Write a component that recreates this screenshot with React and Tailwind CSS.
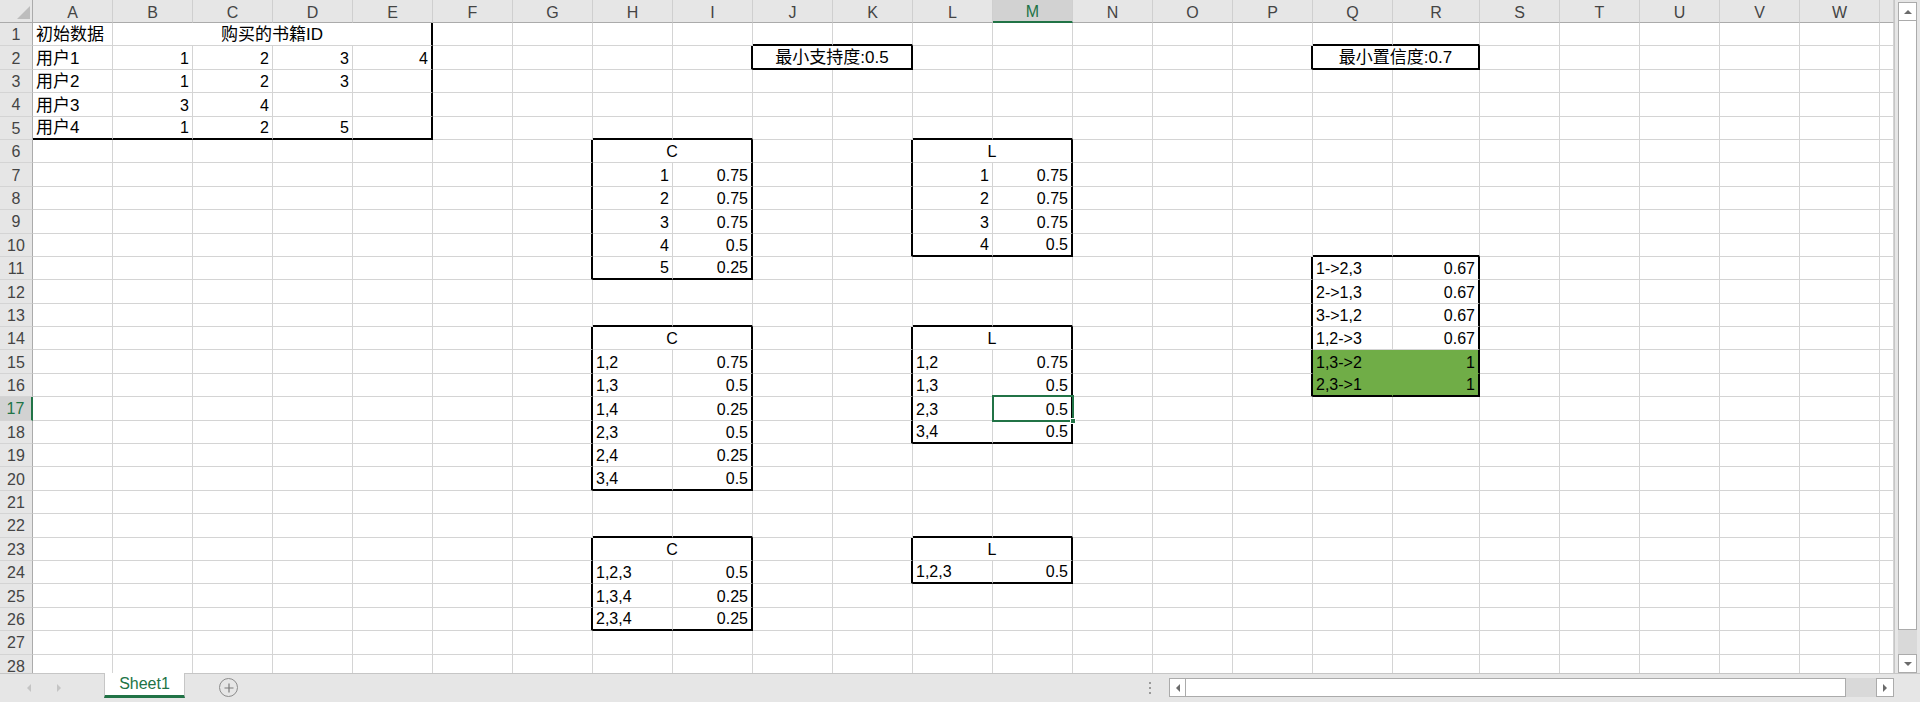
import React from 'react';

const COLS = 'ABCDEFGHIJKLMNOPQRSTUVWX'.split('');
const ROWS = Array.from({ length: 28 }, (_, i) => i + 1);
const WIDTH = {
  14: 'w-[14px]',
  80: 'w-[80px]',
  87: 'w-[87px]',
  160: 'w-[160px]',
  167: 'w-[167px]',
  320: 'w-[320px]',
};
const colW = (i) => (i === 17 ? 87 : i === 23 ? 14 : 80);
const CJK = /[\u4e00-\u9fff]/;

// merged cells: top-left ref -> number of columns
const merges = { B1: 4, J2: 2, Q2: 2, H6: 2, L6: 2, H14: 2, L14: 2, H23: 2, L23: 2 };

const cells = {
  A1: ['初始数据', 'l'], B1: ['购买的书籍ID', 'c'],
  A2: ['用户1', 'l'], B2: ['1', 'r'], C2: ['2', 'r'], D2: ['3', 'r'], E2: ['4', 'r'],
  J2: ['最小支持度:0.5', 'c'], Q2: ['最小置信度:0.7', 'c'],
  A3: ['用户2', 'l'], B3: ['1', 'r'], C3: ['2', 'r'], D3: ['3', 'r'],
  A4: ['用户3', 'l'], B4: ['3', 'r'], C4: ['4', 'r'],
  A5: ['用户4', 'l'], B5: ['1', 'r'], C5: ['2', 'r'], D5: ['5', 'r'],

  H6: ['C', 'c'], L6: ['L', 'c'],
  H7: ['1', 'r'], I7: ['0.75', 'r'], L7: ['1', 'r'], M7: ['0.75', 'r'],
  H8: ['2', 'r'], I8: ['0.75', 'r'], L8: ['2', 'r'], M8: ['0.75', 'r'],
  H9: ['3', 'r'], I9: ['0.75', 'r'], L9: ['3', 'r'], M9: ['0.75', 'r'],
  H10: ['4', 'r'], I10: ['0.5', 'r'], L10: ['4', 'r'], M10: ['0.5', 'r'],
  H11: ['5', 'r'], I11: ['0.25', 'r'],

  Q11: ['1->2,3', 'l'], R11: ['0.67', 'r'],
  Q12: ['2->1,3', 'l'], R12: ['0.67', 'r'],
  Q13: ['3->1,2', 'l'], R13: ['0.67', 'r'],
  Q14: ['1,2->3', 'l'], R14: ['0.67', 'r'],
  Q15: ['1,3->2', 'l'], R15: ['1', 'r'],
  Q16: ['2,3->1', 'l'], R16: ['1', 'r'],

  H14: ['C', 'c'], L14: ['L', 'c'],
  H15: ['1,2', 'l'], I15: ['0.75', 'r'], L15: ['1,2', 'l'], M15: ['0.75', 'r'],
  H16: ['1,3', 'l'], I16: ['0.5', 'r'], L16: ['1,3', 'l'], M16: ['0.5', 'r'],
  H17: ['1,4', 'l'], I17: ['0.25', 'r'], L17: ['2,3', 'l'], M17: ['0.5', 'r'],
  H18: ['2,3', 'l'], I18: ['0.5', 'r'], L18: ['3,4', 'l'], M18: ['0.5', 'r'],
  H19: ['2,4', 'l'], I19: ['0.25', 'r'],
  H20: ['3,4', 'l'], I20: ['0.5', 'r'],

  H23: ['C', 'c'], L23: ['L', 'c'],
  H24: ['1,2,3', 'l'], I24: ['0.5', 'r'], L24: ['1,2,3', 'l'], M24: ['0.5', 'r'],
  H25: ['1,3,4', 'l'], I25: ['0.25', 'r'],
  H26: ['2,3,4', 'l'], I26: ['0.25', 'r'],
};

const GREEN = new Set(['Q15', 'R15', 'Q16', 'R16']);

// thick outlines (column index from A = 0)
const boxes = [
  { c1: 0, c2: 4, r1: 1, r2: 5, open: true },
  { c1: 9, c2: 10, r1: 2, r2: 2 },
  { c1: 16, c2: 17, r1: 2, r2: 2 },
  { c1: 7, c2: 8, r1: 6, r2: 11 },
  { c1: 11, c2: 12, r1: 6, r2: 10 },
  { c1: 7, c2: 8, r1: 14, r2: 20 },
  { c1: 11, c2: 12, r1: 14, r2: 18 },
  { c1: 7, c2: 8, r1: 23, r2: 26 },
  { c1: 11, c2: 12, r1: 23, r2: 24 },
  { c1: 16, c2: 17, r1: 11, r2: 16 },
];

const rightBlack = (cEnd, row) =>
  boxes.some((b) => row >= b.r1 && row <= b.r2 && (cEnd === b.c2 || (!b.open && cEnd === b.c1 - 1)));

const bottomBlack = (c, cEnd, row) =>
  boxes.some((b) => c <= b.c2 && cEnd >= b.c1 && (row === b.r2 || (!b.open && row === b.r1 - 1)));

function Cell({ c, span, row }) {
  const ref = COLS[c] + row;
  const cEnd = c + span - 1;
  let w = 0;
  for (let i = c; i <= cEnd; i++) w += colW(i);
  const [text, align] = cells[ref] || ['', 'l'];
  const green = GREEN.has(ref);

  const cls = [
    'relative flex h-full shrink-0 items-end overflow-visible whitespace-nowrap text-black',
    WIDTH[w],
    rightBlack(cEnd, row)
      ? 'border-r-2 border-r-black'
      : green
      ? 'border-r border-r-[#70ad47]'
      : 'border-r border-r-[#d4d4d4]',
    bottomBlack(c, cEnd, row)
      ? 'border-b-2 border-b-black'
      : green
      ? 'border-b border-b-[#70ad47]'
      : 'border-b border-b-[#d4d4d4]',
    align === 'r' ? 'justify-end pr-[3px]' : align === 'c' ? 'justify-center' : 'justify-start pl-[3px]',
    green ? 'bg-[#70ad47]' : 'bg-white',
    CJK.test(text) ? 'text-[17px]' : 'text-[16px]',
  ].join(' ');

  return (
    <div className={cls}>
      <span className="pb-[2px] leading-[17px]">{text}</span>
      {ref === 'M17' && (
        <div className="pointer-events-none absolute -top-[2px] -right-[3px] -bottom-[2px] -left-px z-10 border-2 border-[#217346]">
          <div className="absolute -right-[4px] -bottom-[4px] h-[6px] w-[6px] border border-white bg-[#217346]" />
        </div>
      )}
    </div>
  );
}

function Row({ row }) {
  const items = [];
  let c = 0;
  while (c < COLS.length) {
    const span = merges[COLS[c] + row] || 1;
    items.push(<Cell key={c} c={c} span={span} row={row} />);
    c += span;
  }
  const sel = row === 17;
  return (
    <div className="flex h-[23.4px] shrink-0">
      <div
        className={`flex w-[33px] shrink-0 items-center justify-center border-b border-b-[#d4d4d4] pt-[2px] text-[16px] ${
          sel
            ? 'border-r-2 border-r-[#217346] bg-[#d2d2d2] text-[#217346]'
            : 'border-r border-r-[#ababab] bg-[#e6e6e6] text-[#444]'
        }`}
      >
        {row}
      </div>
      {items}
    </div>
  );
}

function HeaderRow() {
  return (
    <div className="flex h-[23px] shrink-0">
      <div className="w-[33px] shrink-0 border-r border-b border-r-[#ababab] border-b-[#ababab] bg-[#e6e6e6]">
        <svg width="32" height="22" viewBox="0 0 32 22">
          <polygon points="30,6 30,19 17,19" fill="#bdbdbd" />
        </svg>
      </div>
      {COLS.map((l, i) => (
        <div
          key={l}
          className={`flex shrink-0 items-center justify-center overflow-hidden border-r border-r-[#cfcfcf] pt-[3px] text-[16px] ${
            WIDTH[colW(i)]
          } ${
            i === 12
              ? 'border-b-2 border-b-[#217346] bg-[#d2d2d2] text-[#217346]'
              : 'border-b border-b-[#ababab] bg-[#e6e6e6] text-[#444]'
          }`}
        >
          {i < 23 ? l : ''}
        </div>
      ))}
    </div>
  );
}

function Tri({ dir, color = '#6b6b6b' }) {
  const pts = {
    up: '1,6 9,6 5,2',
    down: '1,2 9,2 5,6',
    left: '6,1 6,9 2,5',
    right: '2,1 2,9 6,5',
  }[dir];
  const size = dir === 'up' || dir === 'down' ? { w: 10, h: 8 } : { w: 8, h: 10 };
  return (
    <svg width={size.w} height={size.h} viewBox={`0 0 ${size.w} ${size.h}`}>
      <polygon points={pts} fill={color} />
    </svg>
  );
}

function VScroll() {
  return (
    <div className="flex w-[26px] shrink-0 flex-col border-l border-l-[#c6c6c6] bg-[#e6e6e6] pt-[2px] pl-[3px]">
      <div className="flex h-[19px] w-[19px] items-center justify-center border border-[#ababab] bg-white">
        <Tri dir="up" />
      </div>
      <div className="h-[609px] w-[19px] border border-t-0 border-[#ababab] bg-white" />
      <div className="w-[19px] flex-1 bg-[#d9d9d9]" />
      <div className="flex h-[19px] w-[19px] items-center justify-center border border-[#ababab] bg-white">
        <Tri dir="down" />
      </div>
    </div>
  );
}

function BottomBar() {
  return (
    <div className="flex h-[29px] shrink-0 items-start border-t border-t-[#c6c6c6] bg-[#e6e6e6]">
      <div className="flex h-[28px] w-[104px] shrink-0 items-center gap-[22px] pl-[25px]">
        <Tri dir="left" color="#c4c4c4" />
        <Tri dir="right" color="#c4c4c4" />
      </div>
      <div className="-mt-px flex h-[25px] w-[81px] shrink-0 items-center justify-center border-x border-x-[#c6c6c6] border-b-[3px] border-b-[#217346] bg-white text-[16px] text-[#217346]">
        Sheet1
      </div>
      <div className="mt-[4px] ml-[34px] flex h-[19px] w-[19px] shrink-0 items-center justify-center rounded-full border border-[#8c8c8c]">
        <svg width="10" height="10" viewBox="0 0 10 10">
          <path d="M5 0.5v9M0.5 5h9" stroke="#7a7a7a" strokeWidth="1.2" />
        </svg>
      </div>
      <div className="flex-1" />
      <div className="flex h-[28px] w-[29px] shrink-0 flex-col justify-center gap-[3px] pl-[9px]">
        <div className="h-[2px] w-[2px] bg-[#9a9a9a]" />
        <div className="h-[2px] w-[2px] bg-[#9a9a9a]" />
        <div className="h-[2px] w-[2px] bg-[#9a9a9a]" />
      </div>
      <div className="mt-[4px] flex h-[19px] w-[725px] shrink-0">
        <div className="flex w-[17px] items-center justify-center border border-[#ababab] bg-white">
          <Tri dir="left" />
        </div>
        <div className="w-[660px] border border-l-0 border-[#ababab] bg-white" />
        <div className="flex-1 bg-[#d9d9d9]" />
        <div className="flex w-[18px] items-center justify-center border border-[#ababab] bg-white">
          <Tri dir="right" />
        </div>
      </div>
      <div className="w-[26px] shrink-0" />
    </div>
  );
}

export default function App() {
  return (
    <div className="flex h-[702px] w-[1920px] flex-col overflow-hidden bg-[#e6e6e6] font-['Liberation_Sans','Noto_Sans_CJK_SC',sans-serif]">
      <div className="flex h-[673px] shrink-0">
        <div className="flex h-[673px] w-[1894px] shrink-0 flex-col overflow-hidden bg-white">
          <HeaderRow />
          {ROWS.map((r) => (
            <Row key={r} row={r} />
          ))}
        </div>
        <VScroll />
      </div>
      <BottomBar />
    </div>
  );
}
